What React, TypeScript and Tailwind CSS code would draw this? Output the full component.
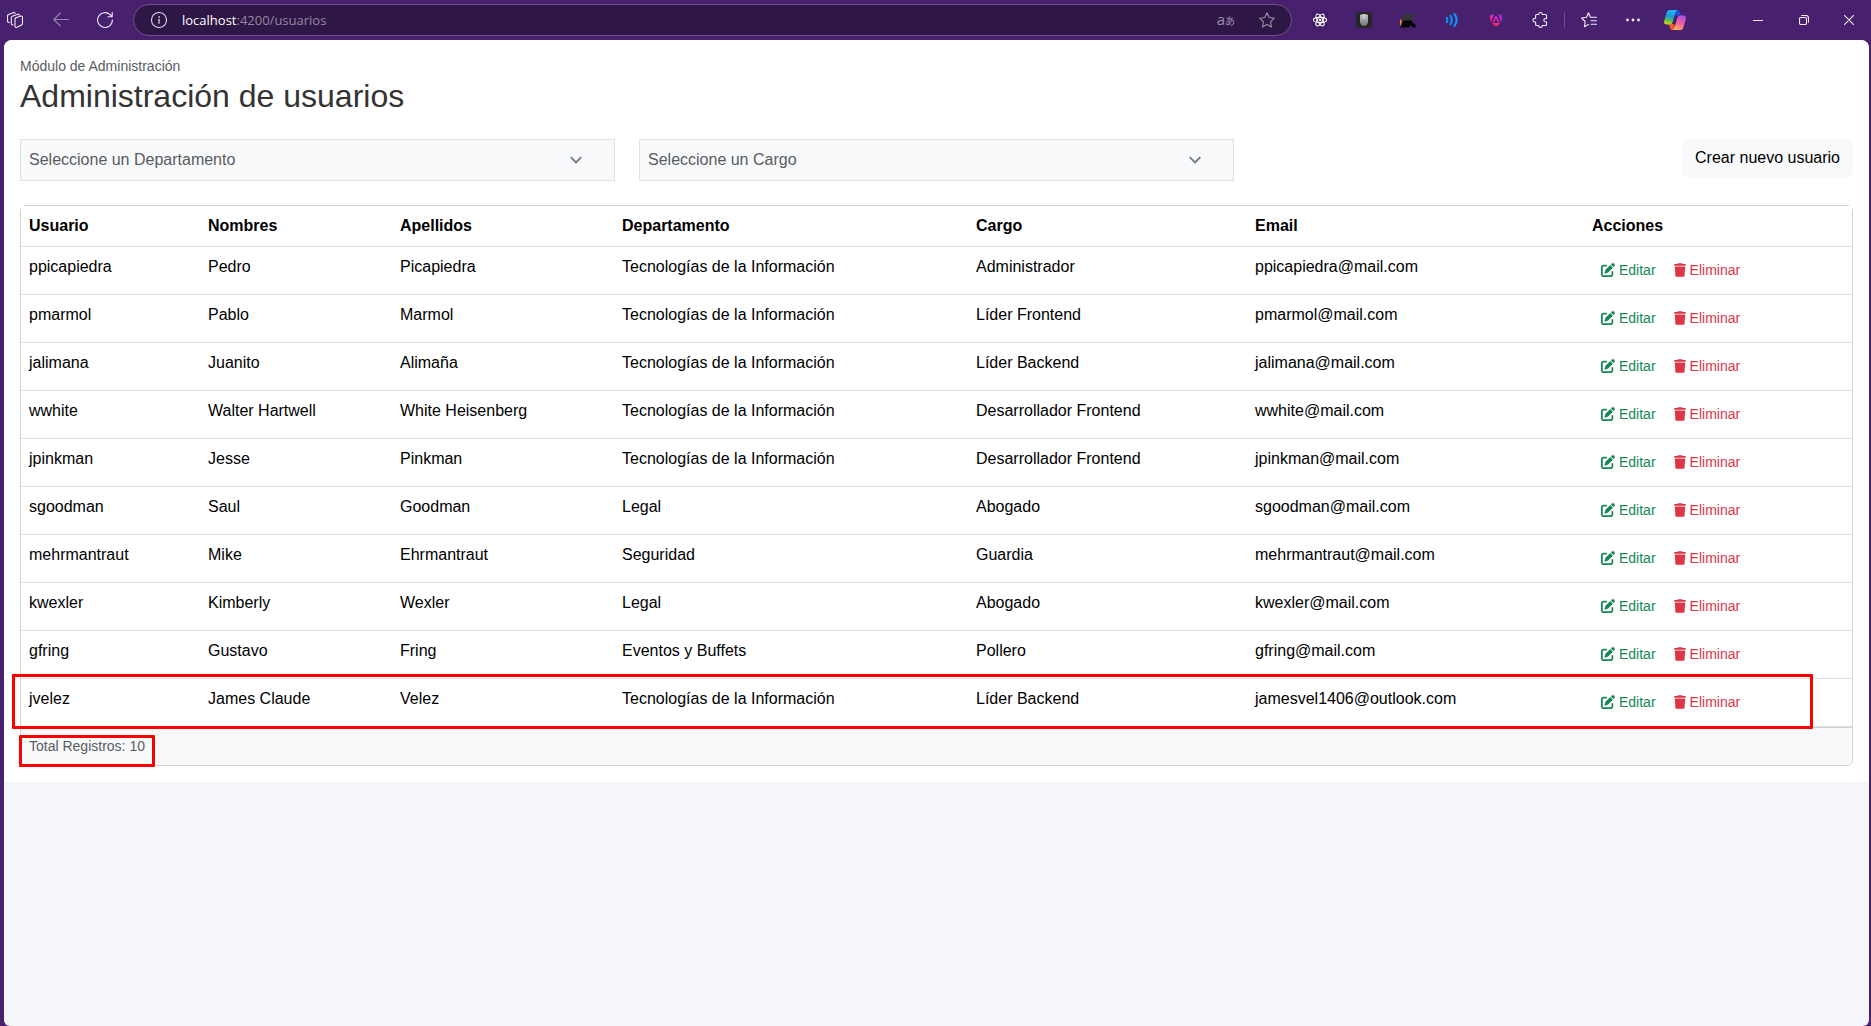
import type { ReactNode } from "react";
import { FaPenToSquare, FaTrash } from "react-icons/fa6";

type User = {
  usuario: string;
  nombres: string;
  apellidos: string;
  departamento: string;
  cargo: string;
  email: string;
};

const TI = "Tecnologías de la Información";

const users: User[] = [
  { usuario: "ppicapiedra", nombres: "Pedro", apellidos: "Picapiedra", departamento: TI, cargo: "Administrador", email: "ppicapiedra@mail.com" },
  { usuario: "pmarmol", nombres: "Pablo", apellidos: "Marmol", departamento: TI, cargo: "Líder Frontend", email: "pmarmol@mail.com" },
  { usuario: "jalimana", nombres: "Juanito", apellidos: "Alimaña", departamento: TI, cargo: "Líder Backend", email: "jalimana@mail.com" },
  { usuario: "wwhite", nombres: "Walter Hartwell", apellidos: "White Heisenberg", departamento: TI, cargo: "Desarrollador Frontend", email: "wwhite@mail.com" },
  { usuario: "jpinkman", nombres: "Jesse", apellidos: "Pinkman", departamento: TI, cargo: "Desarrollador Frontend", email: "jpinkman@mail.com" },
  { usuario: "sgoodman", nombres: "Saul", apellidos: "Goodman", departamento: "Legal", cargo: "Abogado", email: "sgoodman@mail.com" },
  { usuario: "mehrmantraut", nombres: "Mike", apellidos: "Ehrmantraut", departamento: "Seguridad", cargo: "Guardia", email: "mehrmantraut@mail.com" },
  { usuario: "kwexler", nombres: "Kimberly", apellidos: "Wexler", departamento: "Legal", cargo: "Abogado", email: "kwexler@mail.com" },
  { usuario: "gfring", nombres: "Gustavo", apellidos: "Fring", departamento: "Eventos y Buffets", cargo: "Pollero", email: "gfring@mail.com" },
  { usuario: "jvelez", nombres: "James Claude", apellidos: "Velez", departamento: TI, cargo: "Líder Backend", email: "jamesvel1406@outlook.com" },
];

const headers = ["Usuario", "Nombres", "Apellidos", "Departamento", "Cargo", "Email", "Acciones"];

function BarButton({ label, className, children }: { label: string; className: string; children: ReactNode }) {
  return (
    <button type="button" aria-label={label} className={"flex h-full shrink-0 items-center justify-center text-[#efe9f5] " + className}>
      {children}
    </button>
  );
}

function Line({ size = 16, className = "", children }: { size?: number; className?: string; children: ReactNode }) {
  return (
    <svg
      width={size}
      height={size}
      viewBox={`0 0 ${size} ${size}`}
      fill="none"
      stroke="currentColor"
      strokeWidth="1.1"
      strokeLinecap="round"
      strokeLinejoin="round"
      className={className}
      aria-hidden="true"
    >
      {children}
    </svg>
  );
}

function BrowserBar() {
  return (
    <header className="flex h-10 shrink-0 items-center">
      <BarButton label="Áreas de trabajo" className="w-[30px]">
        <Line>
          <path d="M8.2 5.9 13.8 4.1Q15.5 3.7 15.5 5.3v6.2q0 1-1 1.4l-4.6 2.4q-1.9.6-1.9-1.2V7.6q0-1.2 1-1.6" />
          <path d="M6 12.9q-1.7.2-1.7-1.4V5.9q0-1.2 1-1.6l5.6-2q1.2-.3 1.4.8" />
          <path d="M2.2 10.6Q.5 10.6.5 9.100V4q0-1.200 1-1.600L6.800.6Q8 .4 8.200 1.300" />
        </Line>
      </BarButton>
      <BarButton label="Atrás" className="ml-[9px] w-11">
        <Line className="text-[#9a84b3]">
          <path d="M15.500 7.500H.8M7.300 1 .8 7.500 7.300 14" />
        </Line>
      </BarButton>
      <BarButton label="Actualizar" className="w-11">
        <Line>
          <path d="M15.400 8a7.400 7.400 0 1 1-2.300-5.300l1.900 1.900M15.200.6v4.200H11" />
        </Line>
      </BarButton>

      <div className="mr-[6px] ml-[6px] flex h-8 min-w-0 flex-1 items-center rounded-full border border-[#6b5486] bg-[#2e1646] pr-4 pl-[17px]">
        <button type="button" aria-label="Información del sitio" className="text-[#d8d2df]">
          <Line>
            <circle cx="8" cy="8" r="7.500" />
            <path d="M8 7.300v4" strokeWidth="1.300" />
            <circle cx="8" cy="5" r=".5" fill="currentColor" strokeWidth=".6" />
          </Line>
        </button>
        <div role="textbox" aria-label="Dirección" className="ml-[15px] min-w-0 flex-1 truncate font-['Open_Sans',sans-serif] text-[13px] leading-5 text-[#948a9f]">
          <span className="text-white">localhost</span>:4200/usuarios
        </div>
        <button type="button" aria-label="Traducir" className="flex items-baseline text-[#9b91a6]">
          <span className="font-['Open_Sans',sans-serif] text-[15px] leading-5">a</span>
          <span className="font-['Noto_Sans_CJK_JP',sans-serif] text-[10px] leading-5">あ</span>
        </button>
        <button type="button" aria-label="Favorito" className="ml-6 text-[#9b91a6]">
          <Line>
            <path d="m8 .8 2.200 4.700 5.200.7-3.800 3.600.9 5.200L8 12.500 3.500 15l.9-5.200L.6 6.200l5.200-.7Z" />
          </Line>
        </button>
      </div>

      <BarButton label="React Developer Tools" className="w-11">
        <span className="flex size-4 items-center justify-center bg-[#3f1c63]">
          <svg width="16" height="16" viewBox="0 0 16 16" fill="none" stroke="#fff" strokeWidth="1.100" aria-hidden="true">
            <ellipse cx="8" cy="8" rx="6.600" ry="2.600" />
            <ellipse cx="8" cy="8" rx="6.600" ry="2.600" transform="rotate(60 8 8)" />
            <ellipse cx="8" cy="8" rx="6.600" ry="2.600" transform="rotate(120 8 8)" />
            <circle cx="8" cy="8" r="1.200" fill="#fff" stroke="none" />
          </svg>
        </span>
      </BarButton>
      <BarButton label="Extensión de ratón" className="w-11">
        <svg width="16" height="16" viewBox="0 0 16 16" aria-hidden="true">
          <defs>
            <linearGradient id="mouse" x1="0" y1="0" x2="0" y2="1">
              <stop offset="0" stopColor="#c9c9c9" />
              <stop offset="1" stopColor="#727272" />
            </linearGradient>
          </defs>
          <rect width="16" height="16" rx="3" fill="#262626" />
          <path d="M4 3q4-2 8 0v6.500Q11.500 14 8 14T4 9.500Z" fill="url(#mouse)" />
          <path d="M8 2v5" stroke="#e4e4e4" strokeWidth=".8" />
        </svg>
      </BarButton>
      <BarButton label="Extensión de lectura" className="w-11">
        <svg width="16" height="16" viewBox="0 0 16 16" aria-hidden="true">
          <path d="M0 7 2 9 1 13 0 14Z" fill="#f58a17" />
          <path d="M.5 5.500 3.500 4 5 1.500q1.500-1 3.500.3l4 .7V5l2 .5L13 8H3Z" fill="#38353b" />
          <path d="M13 2.500 15.500.5v2l-2 2Z" fill="#38353b" />
          <path d="M3 8.500h8.500l1.500 2.500 3 2-1 2.500h-2.500L10.500 13 9 15.500H0L1.500 13Z" fill="#040404" />
        </svg>
      </BarButton>
      <BarButton label="Extensión de voz" className="w-11">
        <svg width="16" height="16" viewBox="0 0 16 16" fill="none" stroke="#0a91f5" strokeWidth="2.200" strokeLinecap="round" aria-hidden="true">
          <path d="M2.800 6q1.200 2 0 4M6.500 3.800q2.800 4.200 0 8.400M10.500 2q4.200 6 0 12" />
        </svg>
      </BarButton>
      <BarButton label="Angular DevTools" className="w-11">
        <svg width="14" height="14" viewBox="0 0 14 14" aria-hidden="true">
          <defs>
            <linearGradient id="angular" x1=".2" y1="1" x2=".9" y2="0">
              <stop offset="0" stopColor="#ff1245" />
              <stop offset=".5" stopColor="#f02cb0" />
              <stop offset="1" stopColor="#8b24f5" />
            </linearGradient>
          </defs>
          <path d="M.8 2.800 5.200.8 1.700 9.500ZM13.200 2.800 8.800.8 12.300 9.500ZM6.300 3h1.400l2.800 6.300H8.900L7 5.100 5.100 9.300H3.500ZM3 10.800 3.700 9.900h6.600l.7.900L7 13.600Z" fill="url(#angular)" />
        </svg>
      </BarButton>
      <BarButton label="Extensiones" className="w-11">
        <Line>
          <path d="M4.600 2.500h2.200q-.2-2 1.700-2t1.700 2h3.300q1 0 1 1v3q-2.600-.3-2.600 1.700t2.600 1.700v2.600q0 1-1 1h-3.200q0 2-1.800 2t-1.800-2H4.600q-1 0-1-1v-2.400q-2.600.1-2.600-1.900t2.600-1.900V3.500q0-1 1-1Z" />
        </Line>
      </BarButton>
      <span className="mx-[2px] h-4 w-px bg-[#6d4f8c]" />
      <BarButton label="Favoritos" className="w-11">
        <Line>
          <path d="M9.500 5.200 7.500.8 5.600 5.300.6 6l3.600 3.500-.8 5.300 4-2.300M9.300 5.300h6.200M10 8.800h5.500M10 12.300h5.500" />
        </Line>
      </BarButton>
      <BarButton label="Configuración y más" className="w-11">
        <svg width="16" height="16" viewBox="0 0 16 16" fill="currentColor" aria-hidden="true">
          <circle cx="2.500" cy="8" r="1.400" />
          <circle cx="8" cy="8" r="1.400" />
          <circle cx="13.500" cy="8" r="1.400" />
        </svg>
      </BarButton>
      <BarButton label="Copilot" className="w-10">
        <svg width="22" height="20" viewBox="0 0 22 20" aria-hidden="true">
          <defs>
            <linearGradient id="copilotLeft" x1=".3" y1="0" x2=".1" y2="1">
              <stop offset="0" stopColor="#1fb4f2" />
              <stop offset=".4" stopColor="#1f98d8" />
              <stop offset=".7" stopColor="#5fc24d" />
              <stop offset="1" stopColor="#f5d20a" />
            </linearGradient>
            <linearGradient id="copilotRight" x1=".7" y1="0" x2=".3" y2="1">
              <stop offset="0" stopColor="#a653e8" />
              <stop offset=".5" stopColor="#f0609a" />
              <stop offset="1" stopColor="#ffae57" />
            </linearGradient>
          </defs>
          <path d="M11 0h2.500q2 0 2.500 2l1 3.500h-5.500Z" fill="#1c50d8" />
          <path d="M5 14h5l2 6H8.500q-2 0-2.500-2Z" fill="#f0562f" />
          <path d="M5.500 0h8Q12 .5 11.300 3L8.700 12q-.6 2.500-3 2.500H2.300Q-.6 14.500.2 11L2.600 2.500Q3.200 0 5.500 0Z" fill="url(#copilotLeft)" />
          <path d="M16.500 20h-8q1.500-.5 2.200-3l2.600-9q.6-2.500 3-2.500h3.400q2.900 0 2.100 3.500l-2.400 8.500q-.6 2.500-2.900 2.500Z" fill="url(#copilotRight)" />
        </svg>
      </BarButton>
      <BarButton label="Minimizar" className="ml-10 w-[46px]">
        <svg width="10" height="10" viewBox="0 0 10 10" aria-hidden="true">
          <path d="M0 5h10v1H0Z" fill="currentColor" />
        </svg>
      </BarButton>
      <BarButton label="Restaurar" className="w-[46px]">
        <Line size={10}>
          <rect x=".5" y="2.500" width="7" height="7" rx="1.300" />
          <path d="M2.700.5h4.300q2.500 0 2.500 2.500v4.300" />
        </Line>
      </BarButton>
      <BarButton label="Cerrar" className="w-11">
        <Line size={10}>
          <path d="m.3.3 9.400 9.400M9.700.3.300 9.700" />
        </Line>
      </BarButton>
    </header>
  );
}

function FilterSelect({ label }: { label: string }) {
  return (
    <div className="relative">
      <select
        aria-label={label}
        defaultValue=""
        className="block h-[42px] w-full appearance-none border border-[#dee2e6] bg-[#f8f9fb] pr-12 pl-2 text-base text-[#595c5f]"
      >
        <option value="">{label}</option>
      </select>
      <svg
        width="12"
        height="12"
        viewBox="0 0 12 12"
        fill="none"
        stroke="#73787d"
        strokeWidth="1.800"
        className="pointer-events-none absolute top-[15px] right-[33px]"
        aria-hidden="true"
      >
        <path d="m.7 3.200 5.300 5.300 5.300-5.300" />
      </svg>
    </div>
  );
}

function UsersTable() {
  return (
    <section className="relative mt-6 rounded-md border border-[#d0d2d3]">
      <table className="w-full table-fixed border-collapse bg-white text-left text-base text-black">
        <colgroup>
          <col className="w-[179px]" />
          <col className="w-[192px]" />
          <col className="w-[222px]" />
          <col className="w-[354px]" />
          <col className="w-[279px]" />
          <col className="w-[337px]" />
          <col className="w-[268px]" />
        </colgroup>
        <thead>
          <tr className="border-b border-[#dee2e6]">
            {headers.map((h) => (
              <th key={h} scope="col" className="p-2 font-bold">
                {h}
              </th>
            ))}
          </tr>
        </thead>
        <tbody>
          {users.map((u) => (
            <tr key={u.usuario} className="border-b border-[#dee2e6] align-top">
              <td className="p-2">{u.usuario}</td>
              <td className="p-2">{u.nombres}</td>
              <td className="p-2">{u.apellidos}</td>
              <td className="p-2">{u.departamento}</td>
              <td className="p-2">{u.cargo}</td>
              <td className="p-2">{u.email}</td>
              <td className="p-2">
                <div className="flex text-[14px] leading-[21px]">
                  <button type="button" className="flex items-start gap-1 rounded border border-transparent px-2 py-1 text-[#198754]">
                    <FaPenToSquare className="mt-[3px] size-[14px]" aria-hidden="true" />
                    Editar
                  </button>
                  <button type="button" className="flex items-start gap-1 rounded border border-transparent px-2 py-1 text-[#dc3545]">
                    <FaTrash className="mt-[3px] h-[14px] w-3" aria-hidden="true" />
                    Eliminar
                  </button>
                </div>
              </td>
            </tr>
          ))}
        </tbody>
      </table>
      <div className="rounded-b-md border-t border-[#d0d2d3] bg-[#f8f9fb] p-2 text-[14px] leading-[21px] text-[#595c5f]">
        Total Registros: {users.length}
      </div>
      <div className="pointer-events-none absolute right-[39px] bottom-9 left-[-9px] h-[55px] rounded-[1px] border-3 border-[#ff0000]" />
      <div className="pointer-events-none absolute bottom-[-2px] left-[-2px] h-8 w-[136px] rounded-[1px] border-3 border-[#ff0000]" />
    </section>
  );
}

export default function App() {
  return (
    <div className="flex min-h-screen flex-col bg-[#48216e] font-['Liberation_Sans',Arial,sans-serif]">
      <BrowserBar />
      <div className="mr-[2px] ml-1 flex-1 overflow-hidden rounded-t-lg rounded-b-md bg-[#f5f6f9]">
        <main className="bg-white p-4">
          <p className="text-[14px] leading-[21px] text-[#595c5f]">Módulo de Administración</p>
          <h1 className="text-[32px] leading-[38px] text-[#333333]">Administración de usuarios</h1>
          <div className="mt-6 grid grid-cols-3 items-start gap-6">
            <FilterSelect label="Seleccione un Departamento" />
            <FilterSelect label="Seleccione un Cargo" />
            <button type="button" className="h-[38px] justify-self-end rounded-md bg-[#f8f9fb] px-[13px] text-base text-black">
              Crear nuevo usuario
            </button>
          </div>
          <UsersTable />
        </main>
      </div>
    </div>
  );
}
